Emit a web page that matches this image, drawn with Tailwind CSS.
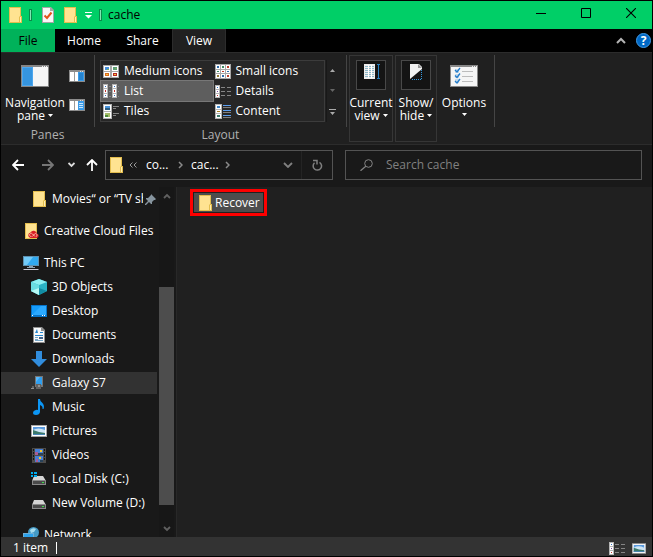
<!DOCTYPE html>
<html lang="en">
<head>
    <meta charset="UTF-8">
    <meta name="viewport" content="width=device-width, initial-scale=1.0">
    <title>cache</title>
    <script src="https://cdn.jsdelivr.net/npm/@tailwindcss/browser@4"></script>
</head>
<body class="bg-black font-['Open_Sans','Noto_Sans',sans-serif] text-[12px] leading-[14px] text-white">
    <!-- Shared icons -->
    <svg class="hidden">
        <symbol id="folder" viewBox="0 0 13 16">
            <path d="M0 0h12v9h1v7H0z" fill="#e3bd4e"/>
            <path d="M1 1h10v8l-1 1v5H1z" fill="#ffe391"/>
            <path d="M11 10h1v5h-1z" fill="#ffefb5"/>
        </symbol>
        <symbol id="picture" viewBox="0 0 16 12">
            <path d="M0 0h16v12H0z" fill="#a8a8a8"/>
            <path d="M1 1h14v10H1z" fill="#fff"/>
            <path d="M2 2h12v8H2z" fill="#5b9bdf"/>
            <path d="M2 5q5-3 12 0v3H2z" fill="#cfe6f5"/>
            <path d="M2 5l6 2 6 1v2H2z" fill="#3c7a6c"/>
            <path d="M2 9h12v1H2z" fill="#4a86b8"/>
        </symbol>
        <symbol id="list" viewBox="0 0 16 14">
            <path d="M0 0h5v14H0zM9 0h5v14H9z" fill="#b5b5b5"/>
            <path d="M1 1h3v3H1zM1 5h3v4H1zM1 10h3v3H1zM10 1h3v3h-3zM10 5h3v4h-3zM10 10h3v3h-3z" fill="#fff"/>
            <path d="M2 2h1v1H2zM11 2h1v1h-1z" fill="#2b6fc4"/>
            <path d="M2 6h1v2H2zM11 6h1v2h-1z" fill="#c4302b"/>
            <path d="M2 11h1v1H2zM11 11h1v1h-1z" fill="#2b6fc4"/>
            <path d="M6 2h2v1H6zM6 7h2v1H6zM6 12h2v1H6zM15 2h1v1h-1zM15 7h1v1h-1zM15 12h1v1h-1z" fill="#888"/>
        </symbol>
        <symbol id="details" viewBox="0 0 16 13">
            <path d="M0 0h5v13H0z" fill="#b5b5b5"/>
            <path d="M1 1h3v3H1zM1 5h3v3H1zM1 9h3v3H1z" fill="#fff"/>
            <path d="M2 2h1v1H2z" fill="#2b6fc4"/>
            <path d="M2 6h1v1H2z" fill="#7a4a9c"/>
            <path d="M2 10h1v1H2z" fill="#c4302b"/>
            <path d="M6 2h4v1H6zM12 2h4v1h-4zM6 6h4v1H6zM12 6h4v1h-4zM6 10h4v1H6zM12 10h4v1h-4z" fill="#858585"/>
        </symbol>
        <symbol id="caret" viewBox="0 0 5 3"><path d="M0 0h5L2.500 3z" fill="currentColor"/></symbol>
        <symbol id="drive" viewBox="0 0 16 16">
            <path d="M3 5h9l3 5H1z" fill="#d5d5d5"/>
            <path d="M1 9h14v5H1z" fill="#8a8a8a"/>
            <path d="M2 10h12v3H2z" fill="#4a4a4a"/>
            <path d="M11 11h2v1h-2z" fill="#3fdc4c"/>
        </symbol>
        <symbol id="pane" viewBox="0 0 16 12">
            <path d="M0 0h16v12H0z" fill="#8c8c8c"/>
            <path d="M1 2h8v9H1z" fill="#fff"/>
            <path d="M5 2h1v9H5z" fill="#9a9a9a"/>
            <path d="M11 1h1v1h-1zM13 1h1v1h-1z" fill="#ddd"/>
        </symbol>
    </svg>

    <div class="flex h-screen flex-col overflow-hidden border border-black">
        <!-- Title bar -->
        <header class="flex h-7 shrink-0 items-center bg-[#00cf67] pl-2 text-black">
            <svg class="h-4 w-[13px]"><use href="#folder"/></svg>
            <span class="ml-[7px] h-3 w-[3px] border border-[#0a8a4a] bg-white/50"></span>
            <button class="ml-[10px]" aria-label="Properties">
                <svg class="h-4 w-3" viewBox="0 0 12 16">
                    <path d="M0 0h9l3 3v13H0z" fill="#a6a6a6"/>
                    <path d="M1 1h7v3h3v11H1z" fill="#f7f7f7"/>
                    <path d="M2.500 8.500l2.500 2.500L9.500 5.500" fill="none" stroke="#e2541b" stroke-width="2"/>
                </svg>
            </button>
            <button class="ml-[10px]" aria-label="New folder">
                <svg class="h-4 w-[13px]"><use href="#folder"/></svg>
            </button>
            <button class="ml-2" aria-label="Customize toolbar">
                <svg class="h-[7px] w-[7px]" viewBox="0 0 7 7"><path d="M0 0h7v1H0zM0 3h7L3.500 6.500z" fill="#fff"/></svg>
            </button>
            <span class="ml-[7px] h-3 w-[3px] border border-[#0a8a4a] bg-white/50"></span>
            <h1 class="ml-[6px]">cache</h1>
            <div class="ml-auto flex h-full gap-[3px] pb-1">
                <button class="flex w-[42px] items-center justify-center" aria-label="Minimize">
                    <svg class="h-[10px] w-[10px]" viewBox="0 0 10 10"><path d="M0 5h10v1H0z"/></svg>
                </button>
                <button class="flex w-[42px] items-center justify-center" aria-label="Maximize">
                    <svg class="h-[10px] w-[10px]" viewBox="0 0 10 10"><path d="M.5.5h9v9h-9z" fill="none" stroke="#000"/></svg>
                </button>
                <button class="flex w-[42px] items-center justify-center" aria-label="Close">
                    <svg class="h-[10px] w-[10px]" viewBox="0 0 10 10"><path d="M0 0l10 10M10 0L0 10" stroke="#000" stroke-width="1.100"/></svg>
                </button>
            </div>
        </header>

        <!-- Tabs -->
        <nav class="flex h-[23px] shrink-0 items-stretch bg-black">
            <button class="w-[54px] bg-[#00b25a] text-black">File</button>
            <button class="w-[58px]">Home</button>
            <button class="w-[59px]">Share</button>
            <button class="w-[54px] border-x border-t border-[#2c2c2c] bg-[#202020]">View</button>
            <div class="ml-auto flex items-center gap-[10px] pr-px">
                <button aria-label="Collapse ribbon">
                    <svg class="h-2 w-[10px]" viewBox="0 0 10 8"><path d="M1 6l4-4 4 4" fill="none" stroke="#b4b4b4" stroke-width="2"/></svg>
                </button>
                <button class="h-[15px] w-[15px] rounded-full border border-[#3f9be8] bg-[#0068c6] text-[12px] leading-[13px] font-bold" aria-label="Help">?</button>
            </div>
        </nav>

        <!-- Ribbon -->
        <section class="flex h-[93px] shrink-0 border-y border-[#2c2c2c] bg-[#202020] py-0.5">
            <div class="flex w-[93px] flex-col items-center">
                <div class="flex h-[73px] w-full pl-1 pt-[10px]">
                    <button class="flex w-[60px] flex-col items-center">
                        <svg class="h-[22px] w-7" viewBox="0 0 28 22">
                            <path d="M0 0h28v22H0z" fill="#858585"/>
                            <path d="M1 2h11v19H1z" fill="#4ba6ee"/>
                            <path d="M2 3h9v17H2z" fill="#3595e0"/>
                            <path d="M12 2h15v19H12z" fill="#f5f5f5"/>
                            <path d="M21 1h1v1h-1zM23 1h1v1h-1zM25 1h1v1h-1z" fill="#eee"/>
                        </svg>
                        <span class="mt-[9px] leading-[13px]">Navigation<br>pane <svg class="mb-[3px] inline h-[3px] w-[5px] align-middle"><use href="#caret"/></svg></span>
                    </button>
                    <div class="ml-1 flex flex-col gap-[17px] pt-[5px]">
                        <button aria-label="Preview pane">
                            <svg class="h-3 w-4" viewBox="0 0 16 12"><use href="#pane"/><path d="M9 2h6v9H9z" fill="#3a9be8"/><path d="M10 3h4v7h-4z" fill="#2583cf"/></svg>
                        </button>
                        <button aria-label="Details pane">
                            <svg class="h-3 w-4" viewBox="0 0 16 12"><use href="#pane"/><path d="M9 2h6v9H9z" fill="#3a9be8"/><path d="M10 4h4v1h-4zM10 6h4v1h-4zM10 8h4v1h-4z" fill="#c8e6ff"/></svg>
                        </button>
                    </div>
                </div>
                <span class="text-[#b0b0b0]">Panes</span>
            </div>
            <div class="h-[72px] w-px bg-[#454545]"></div>

            <div class="flex w-[251px] flex-col items-center">
                <div class="flex h-[73px] w-full pl-[5px] pt-[5px]">
                    <div class="grid h-[62px] flex-1 grid-cols-2 grid-rows-3 border border-[#3c3c3c] bg-[#272727]">
                        <button class="flex items-center gap-[5px] pl-0.5">
                            <svg class="h-[13px] w-4" viewBox="0 0 16 13">
                                <path d="M0 0h16v13H0z" fill="#a8a8a8"/><path d="M1 1h6v5H1zM9 1h6v5H9zM1 7h6v5H1zM9 7h6v5H9z" fill="#fff"/>
                                <path d="M2 2h4v3H2z" fill="#478fda"/><path d="M10 2h4v3h-4z" fill="#5a9c78"/><path d="M2 8h4v3H2z" fill="#d66a1c"/><path d="M10 8h4v3h-4z" fill="#b52a22"/>
                                <path d="M4 4h2v1H4zM12 3h2v1h-2z" fill="#7cb05c"/><path d="M3 9h2v1H3zM11 9h2v1h-2z" fill="#ffc23d"/>
                            </svg>
                            Medium icons
                        </button>
                        <button class="flex items-center gap-[5px] pl-0.5">
                            <svg class="h-[15px] w-4" viewBox="0 0 16 15">
                                <path d="M0 0h16v15H0z" fill="#a8a8a8"/>
                                <path d="M1 1h4v4H1zM6 1h4v4H6zM11 1h4v4h-4zM1 6h4v3H1zM6 6h4v3H6zM11 6h4v3h-4zM1 10h4v4H1zM6 10h4v4H6zM11 10h4v4h-4z" fill="#fff"/>
                                <path d="M2 2h2v2H2zM12 7h2v1h-2zM7 11h2v2H7z" fill="#2d6aa8"/><path d="M7 2h2v2H7zM2 7h2v1H2z" fill="#3d8a62"/><path d="M12 2h2v2h-2zM7 7h2v1H7zM12 11h2v2h-2z" fill="#b83d2b"/><path d="M2 11h2v2H2z" fill="#927a32"/>
                            </svg>
                            Small icons
                        </button>
                        <button class="flex items-center gap-[5px] bg-[#5e5e5e] pl-0.5 outline outline-[#777]">
                            <svg class="h-[14px] w-4"><use href="#list"/></svg>
                            List
                        </button>
                        <button class="flex items-center gap-[5px] pl-0.5">
                            <svg class="h-[13px] w-4"><use href="#details"/></svg>
                            Details
                        </button>
                        <button class="flex items-center gap-[5px] pl-0.5">
                            <svg class="h-[15px] w-4" viewBox="0 0 16 15">
                                <path d="M0 0h9v15H0z" fill="#b5b5b5"/><path d="M1 1h7v6H1zM1 8h7v6H1z" fill="#fff"/>
                                <path d="M2 2h5v4H2z" fill="#4793dc"/><path d="M2 4h5v2H2z" fill="#305f80"/><path d="M2 9h5v4H2z" fill="#a6bd6a"/><path d="M2 11h3v2H2z" fill="#4d8a3a"/>
                                <path d="M10 2h6v1h-6zM10 4h3v1h-3zM10 9h6v1h-6zM10 11h3v1h-3z" fill="#858585"/>
                            </svg>
                            Tiles
                        </button>
                        <button class="flex items-center gap-[5px] pl-0.5">
                            <svg class="h-[15px] w-4" viewBox="0 0 16 15">
                                <path d="M0 0h7v15H0z" fill="#b5b5b5"/><path d="M1 1h5v4H1zM1 6h5v3H1zM1 10h5v4H1z" fill="#fff"/>
                                <path d="M2 2h3v2H2z" fill="#4087c9"/><path d="M2 7h3v1H2z" fill="#a88022"/><path d="M2 11h3v2H2z" fill="#3d7d6d"/>
                                <path d="M8 1h8v1H8zM8 6h8v1H8zM8 11h8v1H8z" fill="#5d9ff0"/><path d="M8 3h8v1H8zM8 8h8v1H8zM8 13h8v1H8z" fill="#808080"/>
                            </svg>
                            Content
                        </button>
                    </div>
                    <div class="ml-px mr-2 grid h-[62px] w-3 grid-rows-3 border-l border-[#181818] text-[#aaa]">
                        <button class="flex items-center justify-center" aria-label="Scroll up"><svg class="h-[3px] w-[5px] rotate-180"><use href="#caret"/></svg></button>
                        <button class="flex items-center justify-center text-[#666]" aria-label="Scroll down"><svg class="h-[3px] w-[5px]"><use href="#caret"/></svg></button>
                        <button class="flex items-center justify-center" aria-label="More layouts"><svg class="h-[6px] w-[7px]" viewBox="0 0 7 6"><path d="M0 0h7v1H0zM1 3h5L3.500 6z" fill="currentColor"/></svg></button>
                    </div>
                </div>
                <span class="text-[#b0b0b0]">Layout</span>
            </div>
            <div class="h-[72px] w-px bg-[#454545]"></div>

            <button class="ml-0.5 flex w-11 flex-col items-center border border-[#363636] pt-1">
                <span class="flex h-[30px] w-[30px] justify-center border border-[#484848] bg-[#141414] pt-[3px]">
                    <svg class="h-4 w-[17px]" viewBox="0 0 17 16">
                        <path d="M1 0h11v15H1z" fill="#eee"/><path d="M2 2h9v1H2zM2 4h9v1H2zM2 6h9v1H2zM2 8h9v1H2zM2 10h9v1H2zM2 12h9v1H2z" fill="#8eb9ca"/><path d="M5 1h1v13H5zM8 1h1v13H8z" fill="#fff"/>
                        <path d="M14 0h3v1h-1v13h1v1h-3v-1h1V1h-1z" fill="#267dbd"/>
                    </svg>
                </span>
                <span class="mt-[6px] leading-[13px]">Current<br>view <svg class="mb-[3px] inline h-[3px] w-[5px] align-middle"><use href="#caret"/></svg></span>
            </button>
            <button class="ml-0.5 flex w-[42px] flex-col items-center border border-[#363636] pt-1">
                <span class="flex h-[30px] w-[30px] justify-center border border-[#484848] bg-[#141414] pt-[3px]">
                    <svg class="h-4 w-3" viewBox="0 0 12 16">
                        <path d="M0 0h9l3 3v2L0 15z" fill="#f2f2f2"/><path d="M8 0v4h4L8 0z" fill="#999"/>
                        <path d="M11.500 6v9.500H1" fill="none" stroke="#3598df" stroke-dasharray="1 1"/>
                    </svg>
                </span>
                <span class="mt-[6px] leading-[13px]">Show/<br>hide <svg class="mb-[3px] inline h-[3px] w-[5px] align-middle"><use href="#caret"/></svg></span>
            </button>
            <button class="flex w-[54px] flex-col items-center pt-[10px]">
                <svg class="h-[22px] w-7" viewBox="0 0 28 22">
                    <path d="M0 0h28v22H0z" fill="#888"/><path d="M1 2h26v19H1z" fill="#f5f5f5"/>
                    <path d="M22 1h1v1h-1zM24 1h1v1h-1zM26 1h1v1h-1z" fill="#eee"/>
                    <path d="M5 4h4v4H5zM5 9h4v4H5zM5 14h4v4H5z" fill="#c9dbea"/>
                    <path d="M5 5l2 2 3-4M5 10.500l2 2 3-4M5 16l2 2 3-4" fill="none" stroke="#237dcc" stroke-width="1.300"/>
                    <path d="M12 6h11v1H12zM12 11h11v1H12zM12 16h11v1H12z" fill="#bcbcbc"/>
                </svg>
                <span class="mt-[9px] leading-[13px]">Options</span>
                <svg class="mt-[4px] h-[3px] w-[5px]"><use href="#caret"/></svg>
            </button>
            <div class="ml-[3px] h-[72px] w-px bg-[#454545]"></div>
        </section>

        <!-- Address and search -->
        <div class="flex h-[42px] shrink-0 items-center bg-[#191919] pb-[2px] pl-[11px] pr-[10px]">
            <button aria-label="Back"><svg class="h-3 w-3" viewBox="0 0 12 12"><path d="M12 6H1M6 1L1 6l5 5" fill="none" stroke="#fff" stroke-width="1.800"/></svg></button>
            <button class="ml-[18px]" aria-label="Forward"><svg class="h-3 w-3" viewBox="0 0 12 12"><path d="M0 6h11M6 1l5 5-5 5" fill="none" stroke="#777" stroke-width="1.800"/></svg></button>
            <button class="ml-[14px]" aria-label="Recent locations"><svg class="h-[6px] w-[7px]" viewBox="0 0 7 6"><path d="M.5 1l3 3 3-3" fill="none" stroke="#ddd" stroke-width="1.800"/></svg></button>
            <button class="ml-[11px]" aria-label="Up"><svg class="h-3 w-3" viewBox="0 0 12 12"><path d="M6 12V1M1 6l5-5 5 5" fill="none" stroke="#fff" stroke-width="1.800"/></svg></button>
            <div class="ml-[7px] flex h-[30px] w-[228px] shrink-0 items-center border border-[#535353] pl-1">
                <svg class="h-4 w-[13px]"><use href="#folder"/></svg>
                <svg class="ml-[6px] h-[6px] w-2" viewBox="0 0 8 6"><path d="M3.500.5L1 3l2.500 2.500M7.500.5L5 3l2.500 2.500" fill="none" stroke="#999"/></svg>
                <a href="#" class="ml-[9px] w-[22px]">co...</a>
                <svg class="ml-[10px] h-2 w-[5px]" viewBox="0 0 5 8"><path d="M1 1l3 3-3 3" fill="none" stroke="#8a8a8a" stroke-width="1.500"/></svg>
                <a href="#" class="ml-2 w-[27px]">cac...</a>
                <svg class="ml-[7px] h-2 w-[5px]" viewBox="0 0 5 8"><path d="M1 1l3 3-3 3" fill="none" stroke="#8a8a8a" stroke-width="1.500"/></svg>
                <button class="ml-auto" aria-label="Previous locations"><svg class="h-[6px] w-[10px]" viewBox="0 0 10 6"><path d="M1 1l4 4 4-4" fill="none" stroke="#808080" stroke-width="1.800"/></svg></button>
                <button class="ml-2 flex h-full w-[31px] items-center justify-center border-l border-[#242424]" aria-label="Refresh">
                    <svg class="h-3 w-[11px]" viewBox="0 0 11 12"><path d="M7.500 3.300A4.200 4.200 0 1 1 2.500 3.800M1 1.500h4v4" fill="none" stroke="#808080" stroke-width="1.500"/></svg>
                </button>
            </div>
            <label class="ml-3 flex h-[30px] min-w-0 flex-1 items-center border border-[#535353] pl-[14px]">
                <svg class="h-3 w-[13px] shrink-0" viewBox="0 0 13 12"><circle cx="8.500" cy="4.500" r="3.800" fill="none" stroke="#858585"/><path d="M5.800 7.200L.5 11.800" stroke="#858585" stroke-width="1.200"/></svg>
                <input type="text" aria-label="Search cache" placeholder="Search cache" class="ml-[13px] min-w-0 flex-1 outline-none placeholder:text-[#808080]">
            </label>
        </div>

        <!-- Body -->
        <div class="flex min-h-0 flex-1 bg-[#202020]">
            <aside class="flex w-[176px] shrink-0 border-r border-[#282828] bg-[#191919]">
                <ul class="w-[156px] overflow-hidden whitespace-nowrap">
                    <li><a href="#" class="flex h-6 items-center gap-[6px] pl-8">
                        <svg class="h-4 w-[13px] shrink-0"><use href="#folder"/></svg>
                        <span class="w-[91px] overflow-hidden">Movies“ or “TV shows</span>
                        <svg class="-ml-1 h-[11px] w-[11px] shrink-0" viewBox="0 0 11 11"><path d="M6 0l5 5-1 1H9L7 8v2L6 10 4 8 1 11H0v-1l3-3-2-2V4h2l3-3z" fill="#86949e"/></svg>
                    </a></li>
                    <li class="mt-2"><a href="#" class="flex h-6 items-center gap-[5px] pl-6">
                        <svg class="h-4 w-[14px] shrink-0" viewBox="0 0 14 16">
                            <path d="M0 0h12v16H0z" fill="#e3bd4e"/><path d="M1 1h10v14H1z" fill="#ffe391"/>
                            <path d="M5.500 15a2.800 2.800 0 0 1 0-5.500A3.500 3.500 0 0 1 12 10.500a2.300 2.300 0 0 1-.5 4.500z" fill="#da1f26"/>
                            <path d="M10 13.500L7.500 11a1.600 1.600 0 1 0-1 2.500M7.500 13.500l2-2.500a1.500 1.500 0 1 1 1.500 2.500" fill="none" stroke="#ffd0b8" stroke-width=".8"/>
                        </svg>
                        Creative Cloud Files
                    </a></li>
                    <li class="mt-2"><a href="#" class="flex h-6 items-center gap-[5px] pl-[22px]">
                        <svg class="h-4 w-4 shrink-0" viewBox="0 0 16 16"><path d="M0 1h16v10H0z" fill="#5d8fae"/><path d="M1 2h14v8H1z" fill="#30a9f0"/><path d="M1 2h9L4 10H1z" fill="#72caf8"/><path d="M6 11h4v1h2v1H4v-1h2z" fill="#8ea3b3"/><path d="M1 14h14l1 1H0z" fill="#c8c8d4"/></svg>
                        This PC
                    </a></li>
                    <li><a href="#" class="flex h-6 items-center gap-[5px] pl-[30px]">
                        <svg class="h-4 w-4 shrink-0" viewBox="0 0 16 16"><path d="M8 0l8 3v9l-8 4-8-4V3z" fill="#2bb3c4"/><path d="M8 0l8 3-8 3-8-3z" fill="#8df0f2"/><path d="M0 3l8 3v10l-8-4z" fill="#6adde2"/><path d="M0 12l8-3v7z" fill="#b5f8f4"/><path d="M8 9l8 3-8 4z" fill="#118ca3"/></svg>
                        3D Objects
                    </a></li>
                    <li><a href="#" class="flex h-6 items-center gap-[5px] pl-[30px]">
                        <svg class="h-4 w-4 shrink-0" viewBox="0 0 16 16"><path d="M0 2h16v12H0z" fill="#0673c8"/><path d="M1 3h14v9H1z" fill="#159bfa"/><path d="M1 12L10 3h5v9z" fill="#2ba9ff"/><path d="M1 12h1v1H1zM11 12h1v1h-1zM13 12h1v1h-1z" fill="#fff"/></svg>
                        Desktop
                    </a></li>
                    <li><a href="#" class="flex h-6 items-center gap-[5px] pl-[30px]">
                        <svg class="h-4 w-4 shrink-0" viewBox="0 0 16 16"><path d="M2 0h9l3 3v13H2z" fill="#8f8f8f"/><path d="M3 1h7v3h3v11H3z" fill="#fafafa"/><path d="M4 6l2-4 1 4M9 5h3v1H9zM4 8h8v1H4z" fill="#2787cf"/><path d="M4 10h3v1H4zM4 12h3v1H4zM4 14h8v-1H4z" fill="#77a6c7"/><path d="M8 10h4v2H8z" fill="#46648a"/></svg>
                        Documents
                    </a></li>
                    <li><a href="#" class="flex h-6 items-center gap-[5px] pl-[30px]">
                        <svg class="h-4 w-4 shrink-0" viewBox="0 0 16 16"><path d="M5 0h6v8h5l-8 8-8-8h5z" fill="#318ddd"/></svg>
                        Downloads
                    </a></li>
                    <li><a href="#" class="flex h-6 items-center gap-[5px] border-y border-[#191919] bg-[#323232] pl-[30px]">
                        <svg class="h-4 w-4 shrink-0" viewBox="0 0 16 16"><path d="M4 1h8v11H4z" fill="#767676"/><path d="M5 2h6v8H5z" fill="#2f9ff0"/><path d="M5 2h4L5 7z" fill="#57baff"/><path d="M5 9h5v3H5zM5 12h5v2H5zM1 11h2v2H1z" fill="#626262"/><path d="M0 13h3v1H0zM7 10h2v2H7z" fill="#929292"/></svg>
                        Galaxy S7
                    </a></li>
                    <li><a href="#" class="flex h-6 items-center gap-[5px] pl-[30px]">
                        <svg class="h-4 w-4 shrink-0" viewBox="0 0 16 16"><path d="M7 0h2q0 2 2 3.500 3 3 1.500 6.500h-1q.5-3-2.500-4v7q-.5 3-4 3-3 0-3-2.200T4.800 11Q6 10.500 7 11z" fill="#0c96f5"/></svg>
                        Music
                    </a></li>
                    <li><a href="#" class="flex h-6 items-center gap-[5px] pl-[30px]">
                        <svg class="h-3 w-4 shrink-0"><use href="#picture"/></svg>
                        Pictures
                    </a></li>
                    <li><a href="#" class="flex h-6 items-center gap-[5px] pl-[30px]">
                        <svg class="h-4 w-4 shrink-0" viewBox="0 0 16 16"><path d="M1 1h14v15H1z" fill="#4b4b4b"/><path d="M2 2h1v2H2zM2 5h1v2H2zM2 8h1v2H2zM2 11h1v2H2zM13 2h1v2h-1zM13 5h1v2h-1zM13 8h1v2h-1zM13 11h1v2h-1z" fill="#161616"/><path d="M4 2h8v6H4zM4 9h8v6H4z" fill="#477fd6"/><path d="M9 3h2v2H9zM8 10h2v2H8z" fill="#f5c728"/><path d="M4 5h3v3H4zM5 12h2v3H5z" fill="#a85c96"/><path d="M7 6h5v2H7zM9 13h3v2H9z" fill="#28435c"/></svg>
                        Videos
                    </a></li>
                    <li><a href="#" class="flex h-6 items-center gap-[5px] pl-[30px]">
                        <svg class="h-4 w-4 shrink-0" viewBox="0 0 16 16"><use href="#drive"/><path d="M0 0h6v6H0z" fill="#191919"/><path d="M0 1h2v2H0zM3 1h3v2H3zM0 4h2v2H0zM3 4h3v2H3z" fill="#00adef"/></svg>
                        Local Disk (C:)
                    </a></li>
                    <li><a href="#" class="flex h-6 items-center gap-[5px] pl-[30px]">
                        <svg class="h-4 w-4 shrink-0"><use href="#drive"/></svg>
                        New Volume (D:)
                    </a></li>
                    <li class="mt-2"><a href="#" class="flex h-6 items-center gap-[5px] pl-[22px]">
                        <svg class="h-4 w-4 shrink-0" viewBox="0 0 16 16"><circle cx="10.500" cy="5.500" r="5.500" fill="#459ac5"/><path d="M7 3q3-3 6-1l-2 3-3 1z" fill="#a7dced"/><path d="M0 6h11v8H0z" fill="#6eaed5"/><path d="M1 7h9v6H1z" fill="#2ba2ed"/></svg>
                        Network
                    </a></li>
                </ul>
                <!-- Scrollbar -->
                <div class="ml-0.5 flex w-[15px] flex-col items-center bg-[#171717]">
                    <svg class="mt-[6px] h-[6px] w-2 shrink-0" viewBox="0 0 8 6"><path d="M1 5l3-3 3 3" fill="none" stroke="#606060" stroke-width="1.800"/></svg>
                    <div class="mt-[88px] w-full flex-1 bg-[#4d4d4d]"></div>
                    <svg class="mb-[5px] mt-[21px] h-[6px] w-2 shrink-0" viewBox="0 0 8 6"><path d="M1 1l3 3 3-3" fill="none" stroke="#606060" stroke-width="1.800"/></svg>
                </div>
            </aside>
            <main class="flex-1 pl-[13px] pt-0.5">
                <div class="w-fit border-[3px] border-[#fe0000]">
                    <a href="#" class="flex h-[21px] w-[71px] items-center gap-[3px] border border-[#202020] bg-[#4d4d4d] pl-[5px]">
                        <svg class="h-4 w-[13px] shrink-0"><use href="#folder"/></svg>
                        Recover
                    </a>
                </div>
            </main>
        </div>

        <!-- Status bar -->
        <footer class="flex h-[19px] shrink-0 items-center bg-[#333] pl-3 pr-[6px] pt-[3px]">
            <span>1 item</span>
            <span class="ml-2 h-3 w-px bg-white"></span>
            <button class="ml-auto" aria-label="Details view"><svg class="h-[13px] w-4"><use href="#details"/></svg></button>
            <button class="ml-[7px]" aria-label="Large icons view"><svg class="h-[11px] w-[14px]"><use href="#picture"/></svg></button>
        </footer>
    </div>
</body>
</html>
